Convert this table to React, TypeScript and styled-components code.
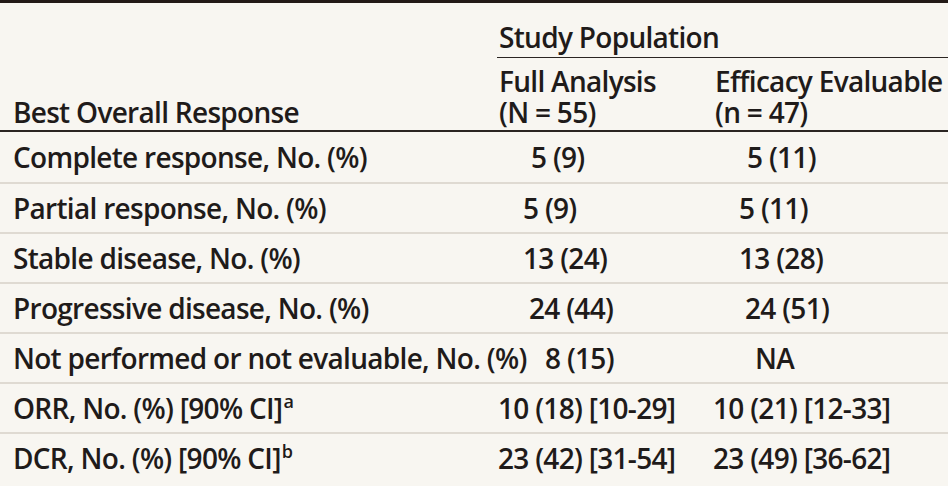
import React from "react";
import styled, { createGlobalStyle } from "styled-components";

const GlobalStyle = createGlobalStyle`
  html, body {
    margin: 0;
    padding: 0;
    background: #f8f6f1;
  }
`;

const Table = styled.div`
  width: 948px;
  height: 486px;
  overflow: hidden;
  box-sizing: border-box;
  background: #f8f6f1;
  border-top: 3px solid #231a17;
  color: #1f1b1a;
  font-family: "Open Sans", "Noto Sans", sans-serif;
  font-size: 28px;
  font-weight: 600;
  letter-spacing: -0.7px;
  white-space: nowrap;
`;

const Header = styled.div`
  display: grid;
  grid-template-columns: 497px 216px 1fr;
  grid-template-rows: 55px 1fr;
  height: 129px;
  box-sizing: border-box;
  border-bottom: 2px solid #2b2522;
`;

const RowLabelHead = styled.div`
  grid-column: 1;
  grid-row: 1 / 3;
  align-self: end;
  padding: 0 0 2px 13px;
  line-height: 31px;
`;

const GroupHead = styled.div`
  grid-column: 2 / 4;
  grid-row: 1;
  align-self: end;
  padding: 0 0 4px 2px;
  line-height: 31px;
  border-bottom: 1.5px solid #2b2522;
`;

const SubHead = styled.div`
  grid-row: 2;
  align-self: end;
  padding: 0 0 2px 2px;
  line-height: 31px;
`;

const Row = styled.div`
  display: grid;
  grid-template-columns: 497px 216px 1fr;
  align-items: center;
  height: 50px;
  box-sizing: border-box;
  & + & {
    border-top: 2px solid #dfdad2;
  }
`;

const Label = styled.div`
  padding-left: 13px;
  line-height: 46px;
  position: relative;
  z-index: 1;
`;

const Value = styled.div<{ $indent: number }>`
  padding-left: ${(p) => p.$indent}px;
  line-height: 46px;
`;

const Sup = styled.sup`
  font-size: 18px;
  line-height: 0;
  vertical-align: 0;
  position: relative;
  top: -11px;
  margin-left: 1px;
`;

type RowData = {
  label: React.ReactNode;
  full: string;
  fullIndent: number;
  eff: string;
  effIndent: number;
};

const rows: RowData[] = [
  { label: "Complete response, No. (%)", full: "5 (9)", fullIndent: 34, eff: "5 (11)", effIndent: 34 },
  { label: "Partial response, No. (%)", full: "5 (9)", fullIndent: 26, eff: "5 (11)", effIndent: 26 },
  { label: "Stable disease, No. (%)", full: "13 (24)", fullIndent: 26, eff: "13 (28)", effIndent: 26 },
  { label: "Progressive disease, No. (%)", full: "24 (44)", fullIndent: 32, eff: "24 (51)", effIndent: 32 },
  { label: "Not performed or not evaluable, No. (%)", full: "8 (15)", fullIndent: 48, eff: "NA", effIndent: 42 },
  {
    label: (
      <>
        ORR, No. (%) [90% CI]<Sup>a</Sup>
      </>
    ),
    full: "10 (18) [10-29]",
    fullIndent: 1,
    eff: "10 (21) [12-33]",
    effIndent: 0,
  },
  {
    label: (
      <>
        DCR, No. (%) [90% CI]<Sup>b</Sup>
      </>
    ),
    full: "23 (42) [31-54]",
    fullIndent: 1,
    eff: "23 (49) [36-62]",
    effIndent: 0,
  },
];

export default function App() {
  return (
    <>
      <GlobalStyle />
      <Table>
        <Header>
          <RowLabelHead>Best Overall Response</RowLabelHead>
          <GroupHead>Study Population</GroupHead>
          <SubHead>
            Full Analysis
            <br />
            (N = 55)
          </SubHead>
          <SubHead>
            Efficacy Evaluable
            <br />
            (n = 47)
          </SubHead>
        </Header>
        {rows.map((r, i) => (
          <Row key={i}>
            <Label>{r.label}</Label>
            <Value $indent={r.fullIndent}>{r.full}</Value>
            <Value $indent={r.effIndent}>{r.eff}</Value>
          </Row>
        ))}
      </Table>
    </>
  );
}
